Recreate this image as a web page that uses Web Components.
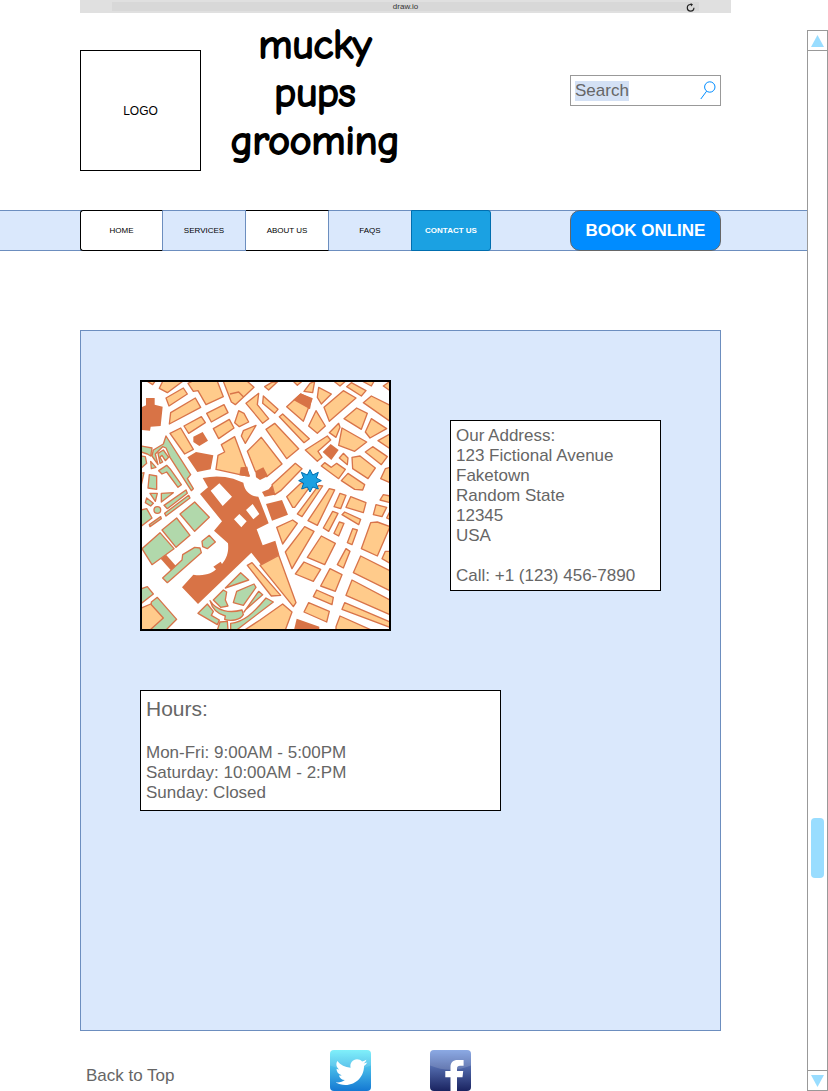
<!DOCTYPE html>
<html lang="en">
<head>
<meta charset="utf-8">
<meta name="viewport" content="width=device-width, initial-scale=1">
<title>Mucky Pups Grooming - Contact Us</title>
<style>
  html, body { margin: 0; background: #fff; font-family: "Liberation Sans", Arial, sans-serif; }
</style>
</head>
<body>
<contact-page></contact-page>

<script>
const define = (name, html) => {
  const template = document.createElement('template');
  template.innerHTML = '<style>*,*::before,*::after{box-sizing:border-box}</style>' + html;
  customElements.define(name, class extends HTMLElement {
    constructor() {
      super();
      this.attachShadow({ mode: 'open' }).append(template.content.cloneNode(true));
    }
  });
};

define('address-bar', `
<style>
  :host { display: flex; height: 13px; padding: 2px 32px; background: #e0e0e0; }
  div { flex: 1; display: grid; grid-template-columns: 1fr auto 1fr; align-items: center; background: #d8d8d8; color: #333; font-size: 8px; line-height: 10px; }
  span { grid-column: 2; }
  button { justify-self: end; display: flex; margin: 0 4px 0 0; padding: 0; border: 0; background: none; }
</style>
<div><span><slot></slot></span>
<button type="button" aria-label="Reload"><svg width="9" height="9" viewBox="0 0 9 9" fill="none" stroke="#222" stroke-width="1.2"><path d="M7.9 4.8A3.3 3.3 0 1 1 4.6 1.5H6"/><path d="M4.6 0L7 1.6L5 3.4z" fill="#222" stroke="none"/></svg></button></div>`);

define('site-logo', `
<style>
  :host { display: grid; place-items: center; width: 121px; height: 121px; border: 1px solid #000; background: #fff; font-size: 12px; }
</style><slot></slot>`);

define('site-title', `
<style>
  :host { display: block; }
  h1 { margin: 0; width: 180px; text-align: center; font: 400 41px/48px "Comic Sans MS", "Comic Neue", Lato, sans-serif; -webkit-text-stroke: 2px #000; }
</style><h1><slot></slot></h1>`);

define('search-box', `
<style>
  :host { display: block; width: 151px; }
  form { display: flex; align-items: center; justify-content: space-between; height: 31px; margin: 0; padding: 0 4px; border: 1px solid #999; background: #fff; }
  input { width: 54px; field-sizing: content; max-width: 112px; height: 20px; margin: 0; padding: 0; border: 0; outline: 0; background: #d4e1f5; color: #666; font: 17px/20px "Liberation Sans", Arial, sans-serif; }
  button { display: flex; padding: 0; border: 0; background: none; }
</style>
<form role="search"><input type="text" aria-label="Search" value="Search">
<button type="button" aria-label="Submit search"><svg width="16" height="19" viewBox="0 0 16 19" fill="none" stroke="#008cff"><circle cx="9.8" cy="6" r="5.2"/><path d="M6.6 10.2L.8 18"/></svg></button></form>`);

define('nav-tab', `
<style>
  :host { display: block; flex: 0 0 83px; }
  :host([current]) { flex-basis: 80px; margin-left: -1px; }
  a { display: grid; place-items: center; height: 41px; border: 1px solid #6c8ebf; border-left-width: 0; background: #dae8fc; color: #000; font-size: 8px; text-decoration: none; white-space: nowrap; }
  :host([plain]) a { border-color: #000 #6c8ebf #000 #000; background: #fff; }
  :host([first]) a { border-left-width: 1px; border-radius: 3px 0 0 3px; }
  :host([current]) a { border-color: #006eaf; border-left-width: 1px; border-radius: 0 3px 3px 0; background: #1ba1e2; color: #fff; font-weight: 700; }
</style><a href="#"><slot></slot></a>`);

define('site-nav', `
<style>
  :host { display: flex; justify-content: space-between; height: 41px; padding: 0 86px 0 80px; border: 1px solid #6c8ebf; border-width: 1px 0; background: #dae8fc; }
  nav { display: flex; margin: -1px 0; }
  button { width: 151px; height: 41px; margin: -1px 0; padding: 0; border: 1px solid #666; border-radius: 10px; background: #008cff; color: #fff; font: 700 17px/20px "Liberation Sans", Arial, sans-serif; }
</style><nav aria-label="Main"><slot></slot></nav><button type="button">BOOK ONLINE</button>`);

define('info-card', `
<style>
  :host { display: block; padding: 5px 5px 4px; border: 1px solid #000; background: #fff; color: #666; font-size: 17px; line-height: 20px; }
</style><slot></slot>`);

define('street-map', `
<style>
  :host { display: block; flex: none; width: 251px; height: 251px; border: 2px solid #000; background: #fff; }
  svg { display: block; width: 100%; height: 100%; }
  .o { fill: #ffcb8b; } .g { fill: #b1d8ab; } .r { fill: #d87346; stroke: none; }
</style>
<svg viewBox="36 36 741 741" role="img" aria-label="Map of our neighbourhood" stroke="#d8744a" stroke-width="4" stroke-linejoin="round">
  <!-- north-west -->
  <path class="o" d="M52 34L75 34 68 44zM98 34L158 34 112 68 88 55zM108 84L160 54 172 72 117 108zM118 162L122 128 196 84 212 112zM174 40L186 34 262 34 280 80 228 104 204 62 190 64zM280 34L352 34 372 52 316 104 304 96zM300 72L326 66 340 80M120 190L152 174 190 238 164 252zM162 168L214 140 226 158 176 190zM230 130L282 104 294 128 244 156zM250 176L298 148 312 174 266 206zM314 158L326 122 342 130 356 156 328 170zM334 198L340 182 378 166 370 180 346 220zM348 100L386 70 382 104 416 146 398 160zM274 224L314 200 358 318 330 314 258 298 264 256 284 246zM352 244L394 202 456 282 410 320 376 304z"/>
  <path class="r" d="M48 84H74V104L98 110 92 168 62 170 60 182 34 180V112L48 106zM190 200L218 186 234 212 208 228 190 216zM172 262L198 246 250 256 242 298 202 306zM332 292L352 290 358 320 328 316zM376 304L400 292 414 318 390 330 378 322zM396 366L416 358 426 346 434 374 404 380zM408 402L456 390 474 434 426 452z"/>
  <!-- the large market hall with its courtyards -->
  <path class="r" fill-rule="evenodd" d="M218 324Q265 314 310 326L340 338C344 368 368 380 385 380L392 398 416 460 380 478 398 526 436 512 448 554 394 586 364 548 204 702 156 652 190 614C225 620 250 608 258 598L250 590 272 575 276 582C294 560 296 540 294 520L252 482 276 454 210 372 234 352zM242 362L268 340 306 380 278 408zM312 448L328 432 350 454 334 472zM348 420L368 402 388 432 370 448z"/>
  <!-- west gardens -->
  <g class="g" transform="translate(24 180)">
    <path d="M10 48L42 54 38 78 28 72 10 66zM84 18L158 134 148 146 166 176 160 182 96 82 84 54 74 50 52 72 60 104 42 78 46 60 76 42zM60 70L76 60 92 82 82 92 72 76 66 82 74 96 66 100zM62 122L86 106 96 116 130 164 120 172 86 126 72 132zM8 78L22 80 26 100 8 116zM38 94L54 112 40 116zM34 134L56 138 56 178 30 174zM8 130L18 128 10 164zM36 190L58 190 52 214zM70 190L106 188 70 216zM26 204L46 220 38 228 22 218zM78 226L144 180 148 190 88 236zM80 250L152 196 156 204 84 258zM8 240L26 236 42 264 8 290zM34 284L68 260 70 266 36 290z"/>
    <circle cx="58" cy="240" r="10"/>
  </g>
  <!-- south-west -->
  <g transform="translate(0 390)">
    <path class="r" d="M92 176L108 164 140 200 124 212z"/>
    <path class="g" d="M36 146L90 98 132 146 66 194zM96 90L140 54 180 106 138 142zM150 42L194 6 238 52 194 94zM216 124L238 106 256 126 232 146 218 140zM98 234L156 180 158 164 194 142 210 144 214 158 112 248zM34 266L52 260 70 282 34 310zM64 306L82 292 140 358 108 390H60zM286 264L332 218 356 240zM310 308L320 274 372 252 378 262 340 316zM250 300L280 270 290 276 286 300 294 318 272 322zM204 340L232 312 250 334 244 346 268 360 262 374zM240 302C260 334 300 340 336 330L340 344C330 362 300 364 284 358L286 348C262 342 246 324 240 302zM342 336L386 274 398 284 346 330zM302 370C340 366 370 340 408 294L430 306 320 390H302zM270 366L292 364 294 390H262z"/>
    <path class="o" d="M34 324L62 312 100 354 60 390H34zM352 196L366 188 452 286 424 288zM344 390L390 360 458 312 486 336 466 390z"/>
  </g>
  <!-- north-east -->
  <g transform="translate(390 0)">
    <path class="o" d="M14 50L34 38 54 34 26 60zM100 34L126 34 112 46zM132 64L150 40 164 34 158 68zM176 52L214 72 184 102 172 82zM222 34L256 34 240 48zM260 50L274 38 318 62 304 78zM308 34L342 34 334 48zM370 48L390 34V62zM10 78L54 118 44 130 8 100zM80 110L122 72 156 86 130 154zM192 112L250 62 288 84 208 154zM310 98L334 78 390 106V154zM252 146L290 114 322 130 304 178zM146 168L168 122 196 168 172 190zM58 140L68 132 148 206 132 218zM18 178L44 160 116 236 80 266zM208 188L236 160 240 172 228 202zM316 186L334 146 380 176 330 204zM236 226L246 174 320 216 284 244zM136 240L202 198 212 210 174 244 186 262 172 274zM238 264L250 250 264 264 262 284zM276 262L300 258 346 294 324 326 278 296zM316 246L338 230 382 260 364 284zM354 212L390 192V236zM362 326L376 296 390 292V338zM184 288L194 278 214 292 230 280 256 298 236 326zM244 332L264 310 314 344 308 360 284 358zM36 344L106 280 126 296 62 362 44 374zM80 380L124 338 150 350 104 412 98 412zM112 432L176 346 188 348 126 440zM144 452L208 356 224 360 172 466zM222 410L240 370 258 376 242 416zM258 412L272 380 318 398 310 428zM360 390L370 374 390 378V398zM340 434L348 404 380 412 366 440z"/>
    <path class="r" d="M100 90L122 70 156 86 150 118zM188 246L212 222 236 240 214 270z"/>
    <path d="M150 299L158 315 175 307 169 324 184 332 168 339 175 357 158 351 150 366 142 351 125 357 131 339 116 332 131 324 124 307 142 315z" fill="#1ba1e2" stroke="#006eaf" stroke-width="3"/>
  </g>
  <!-- south-east -->
  <g transform="translate(390 390)">
    <path class="o" d="M0 196L56 166 108 308 100 320zM50 82L98 60 112 70 68 132zM76 156L134 80 162 94 96 206zM190 84L218 34 234 40 206 94zM246 44L254 36 302 58 296 74zM222 100L238 66 252 70 236 108zM262 128L278 86 292 90 276 134zM142 172L184 108 226 130 194 194zM232 194L258 146 270 154 250 204zM304 146L332 68 352 66 390 80 352 168zM366 176L376 154 390 154V190zM280 218L302 168 390 212V272zM106 222L132 186 182 208 160 244zM182 258L210 206 246 224 226 274zM258 286L276 240 390 300V344zM160 290L170 270 220 292 216 314zM132 336L146 308 208 334 200 366zM246 328L254 308 390 366V382zM228 380L240 348 334 390H228zM380 54L390 34V58z"/>
    <path class="r" d="M102 390L110 356 178 380V390z"/>
  </g>
</svg>`);

define('contact-panel', `
<style>
  :host { display: block; min-height: 701px; padding: 49px 59px; border: 1px solid #6c8ebf; background: #dae8fc; }
  .row { display: flex; flex-wrap: wrap; gap: 20px; align-items: center; justify-content: space-between; }
  .address { width: 211px; }
  .hours { width: 361px; max-width: 100%; margin-top: 59px; padding-bottom: 7px; }
  address { font-style: normal; }
  p { margin: 0; }
  address p { margin-top: 20px; }
  h2 { margin: 0 0 22px; font-size: 21px; line-height: 25px; font-weight: 400; }
</style>
<div class="row">
  <street-map></street-map>
  <info-card class="address"><address>Our Address:<br>123 Fictional Avenue<br>Faketown<br>Random State<br>12345<br>USA<p>Call: +1 (123) 456-7890</p></address></info-card>
</div>
<info-card class="hours"><h2>Hours:</h2><p>Mon-Fri: 9:00AM - 5:00PM</p><p>Saturday: 10:00AM - 2:PM</p><p>Sunday: Closed</p></info-card>`);

define('site-footer', `
<style>
  :host { display: flex; align-items: center; height: 41px; padding-left: 6px; font-size: 17px; line-height: 20px; }
  .top { flex: 0 0 244px; padding-top: 10px; color: #666; text-decoration: none; }
  .social { display: flex; gap: 59px; }
  .social a { display: flex; }
</style>
<a class="top" href="#">Back to Top</a>
<div class="social">
  <a href="#" aria-label="Twitter"><svg width="41" height="41" viewBox="0 0 41 41"><defs><linearGradient id="t" x2="0" y2="1"><stop stop-color="#6eeefa"/><stop offset="1" stop-color="#1478d2"/></linearGradient></defs><rect width="41" height="41" rx="4" fill="url(#t)"/><path d="M0 4a4 4 0 0 1 4-4h33a4 4 0 0 1 4 4v11.500Q20.500 24 0 15.500z" fill="#fff" opacity=".12"/><path transform="translate(-.6 0)" d="M6.300 32.300C10 32.800 13 31.900 15.400 30C12.500 29.800 10.300 28 9.500 25.400C10.500 25.600 11.300 25.500 12.300 25.300C9.200 24.500 7.100 22 7.100 18.800C8 19.300 8.900 19.600 9.900 19.600C7 17.500 6.200 14 7.900 11C11.200 15 15.600 17.400 21.200 17.700C20.100 12.800 23.400 9.200 27.600 9.200C29.600 9.200 31.400 10 32.700 11.400C34.300 11.100 35.700 10.500 37 9.800C36.500 11.400 35.500 12.700 34.100 13.500C35.500 13.300 36.700 13 37.900 12.500C37 13.900 35.900 15 34.600 16C34.900 25.700 27.200 35 16 35C12.400 35 9.100 34 6.300 32.300z" fill="#fff"/></svg></a>
  <a href="#" aria-label="Facebook"><svg width="41" height="41" viewBox="0 0 41 41"><defs><linearGradient id="f" x2="0" y2="1"><stop stop-color="#789be0"/><stop offset="1" stop-color="#1a2360"/></linearGradient></defs><rect width="41" height="41" rx="4" fill="url(#f)"/><path d="M0 4a4 4 0 0 1 4-4h33a4 4 0 0 1 4 4v11.500Q20.500 24 0 15.500z" fill="#fff" opacity=".15"/><path d="M20.500 41V27.300H15.300V21H20.500V17.200C20.500 12.500 23.200 10 27.600 10H33.600V15.800H30C28 15.800 27 16.700 27 18.600V21H33.200L32.500 27.300H27V41z" fill="#fff"/></svg></a>
</div>`);

define('scroll-rail', `
<style>
  :host { display: flex; flex-direction: column; border: 1px solid #999; background: #fff; }
  button { display: grid; place-items: center; flex: none; width: 100%; height: 20px; padding: 0; border: 0 solid #999; background: none; }
  .up { border-bottom-width: 1px; } .down { border-top-width: 1px; }
  .track { flex: 1; display: flex; flex-direction: column; padding: 0 3px; }
  .track::before { content: ""; flex: 4; } .track::after { content: ""; flex: 1; }
  .thumb { height: 60px; border-radius: 4px; background: #99ddff; }
</style>
<button class="up" type="button" aria-label="Scroll up"><svg width="13" height="12" viewBox="0 0 13 12" fill="#9df"><path d="M6.500 0L13 12H0z"/></svg></button>
<div class="track"><div class="thumb"></div></div>
<button class="down" type="button" aria-label="Scroll down"><svg width="13" height="12" viewBox="0 0 13 12" fill="#9df"><path d="M6.500 12L13 0H0z"/></svg></button>`);

define('contact-page', `
<style>
  :host { display: grid; grid-template-columns: minmax(0, 1fr) 21px; min-height: 100vh; }
  .page { display: flex; flex-direction: column; }
  address-bar { margin: 0 76px 0 80px; }
  header { display: flex; align-items: flex-start; height: 197px; padding: 8px 86px 0 80px; }
  site-logo { margin-top: 29px; }
  site-title { margin-left: 24px; }
  search-box { margin: 54px 0 0 auto; }
  contact-panel { margin: 79px 86px 19px 80px; }
  site-footer { margin: 0 86px 0 80px; }
  scroll-rail { margin-top: 30px; }
</style>
<div class="page">
  <address-bar>draw.io</address-bar>
  <header><site-logo>LOGO</site-logo><site-title>mucky pups grooming</site-title><search-box></search-box></header>
  <site-nav><nav-tab plain first>HOME</nav-tab><nav-tab>SERVICES</nav-tab><nav-tab plain>ABOUT US</nav-tab><nav-tab>FAQS</nav-tab><nav-tab current>CONTACT US</nav-tab></site-nav>
  <main><contact-panel></contact-panel></main>
  <site-footer></site-footer>
</div>
<scroll-rail></scroll-rail>`);
</script>
</body>
</html>
